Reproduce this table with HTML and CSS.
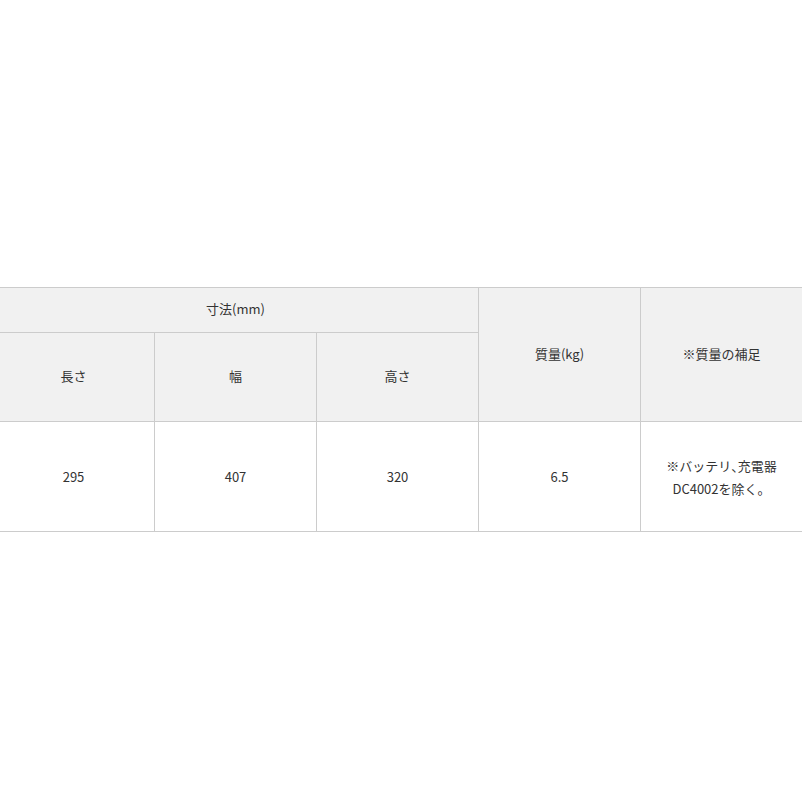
FILE: index.html
```html
<!DOCTYPE html>
<html lang="ja">
<head>
<meta charset="utf-8">
<link rel="stylesheet" href="styles.css">
</head>
<body>
<div class="wrap">
<table class="spec">
<colgroup><col><col><col><col><col></colgroup>
<thead>
<tr class="r1"><th colspan="3">寸法(mm)</th><th rowspan="2">質量(kg)</th><th rowspan="2">※質量の補足</th></tr>
<tr class="r2"><th>長さ</th><th>幅</th><th>高さ</th></tr>
</thead>
<tbody>
<tr class="r3"><td>295</td><td>407</td><td>320</td><td>6.5</td><td>※バッテリ<span class="half">、</span>充電器<br>DC4002を除く。</td></tr>
</tbody>
</table>
</div>
</body>
</html>
```

FILE: styles.css
```css
html, body { margin: 0; padding: 0; background: #fff; }
body { width: 802px; height: 802px; overflow: hidden; }
.wrap { padding-top: 287px; margin-left: -8px; }
.spec {
  border-collapse: collapse;
  table-layout: fixed;
  width: 811px;
  font-family: "Noto Sans CJK JP", "Noto Sans", sans-serif;
  font-size: 13px;
  line-height: 23px;
  color: #333;
}
.spec col { width: 162px; }
.spec th, .spec td {
  border: 1px solid #ccc;
  text-align: center;
  vertical-align: middle;
  padding: 0;
  font-weight: normal;
}
.spec th { background: #f1f1f1; padding-bottom: 3px; }
.spec td { background: #fff; }
.half { font-feature-settings: "halt"; }
.r1 th { height: 41px; }
.r2 th { height: 85px; }
.r3 td { height: 109px; }
```
